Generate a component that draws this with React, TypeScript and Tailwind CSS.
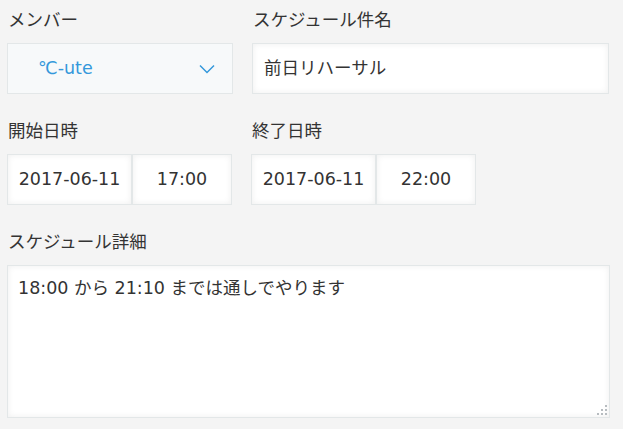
import React from "react";

const font = { fontFamily: '"DejaVu Sans", "Noto Sans CJK JP", sans-serif' };

function Label({ children }: { children: React.ReactNode }) {
  return <div className="h-[36px] text-[17.5px] leading-[24px] text-[#333] pt-[1px] pl-[1px]">{children}</div>;
}

function Box({ children, className = "" }: { children: React.ReactNode; className?: string }) {
  return (
    <div
      className={
        "h-[51px] border border-[#e3e7e8] bg-white shadow-[inset_0_0_6px_rgba(0,0,0,0.07)] flex items-center text-[17.5px] text-[#333] " +
        className
      }
    >
      {children}
    </div>
  );
}

export default function App() {
  return (
    <div className="w-[623px] h-[429px] bg-[#f4f4f4] overflow-hidden" style={font}>
      <div className="pl-[7px] pt-[7px]">
        <div className="flex gap-[19px]">
          <div className="w-[226px]">
            <Label>メンバー</Label>
            <div className="h-[51px] border border-[#e3e7e8] bg-[#f7f9fa] flex items-center justify-between pl-[30px] pr-[17px]">
              <span className="text-[17.5px] text-[#3498db]">℃-ute</span>
              <svg width="16" height="10" viewBox="0 0 16 10" fill="none">
                <path d="M1 1.5 L8 8.5 L15 1.5" stroke="#3498db" strokeWidth="1.5" />
              </svg>
            </div>
          </div>
          <div className="w-[357px]">
            <Label>スケジュール件名</Label>
            <Box className="pl-[11px]">前日リハーサル</Box>
          </div>
        </div>
        <div className="flex gap-[19px] mt-[24px]">
          <div>
            <Label>開始日時</Label>
            <div className="flex">
              <Box className="w-[125px] justify-center">2017-06-11</Box>
              <Box className="w-[100px] justify-center">17:00</Box>
            </div>
          </div>
          <div>
            <Label>終了日時</Label>
            <div className="flex">
              <Box className="w-[125px] justify-center">2017-06-11</Box>
              <Box className="w-[100px] justify-center">22:00</Box>
            </div>
          </div>
        </div>
        <div className="mt-[24px]">
          <Label>スケジュール詳細</Label>
          <div className="relative w-[603px] h-[153px] border border-[#e3e7e8] bg-white shadow-[inset_0_0_6px_rgba(0,0,0,0.07)] px-[10px] pt-[9px] text-[17.5px] leading-[26px] text-[#333]">
            18:00 から 21:10 までは通しでやります
            <svg className="absolute right-[1px] bottom-[1px]" width="12" height="12" viewBox="0 0 12 12">
              <rect x="9" y="1" width="2" height="2" fill="#b7bcc0" />
              <rect x="5" y="5" width="2" height="2" fill="#b7bcc0" />
              <rect x="9" y="5" width="2" height="2" fill="#b7bcc0" />
              <rect x="1" y="9" width="2" height="2" fill="#b7bcc0" />
              <rect x="5" y="9" width="2" height="2" fill="#b7bcc0" />
              <rect x="9" y="9" width="2" height="2" fill="#b7bcc0" />
            </svg>
          </div>
        </div>
      </div>
    </div>
  );
}
